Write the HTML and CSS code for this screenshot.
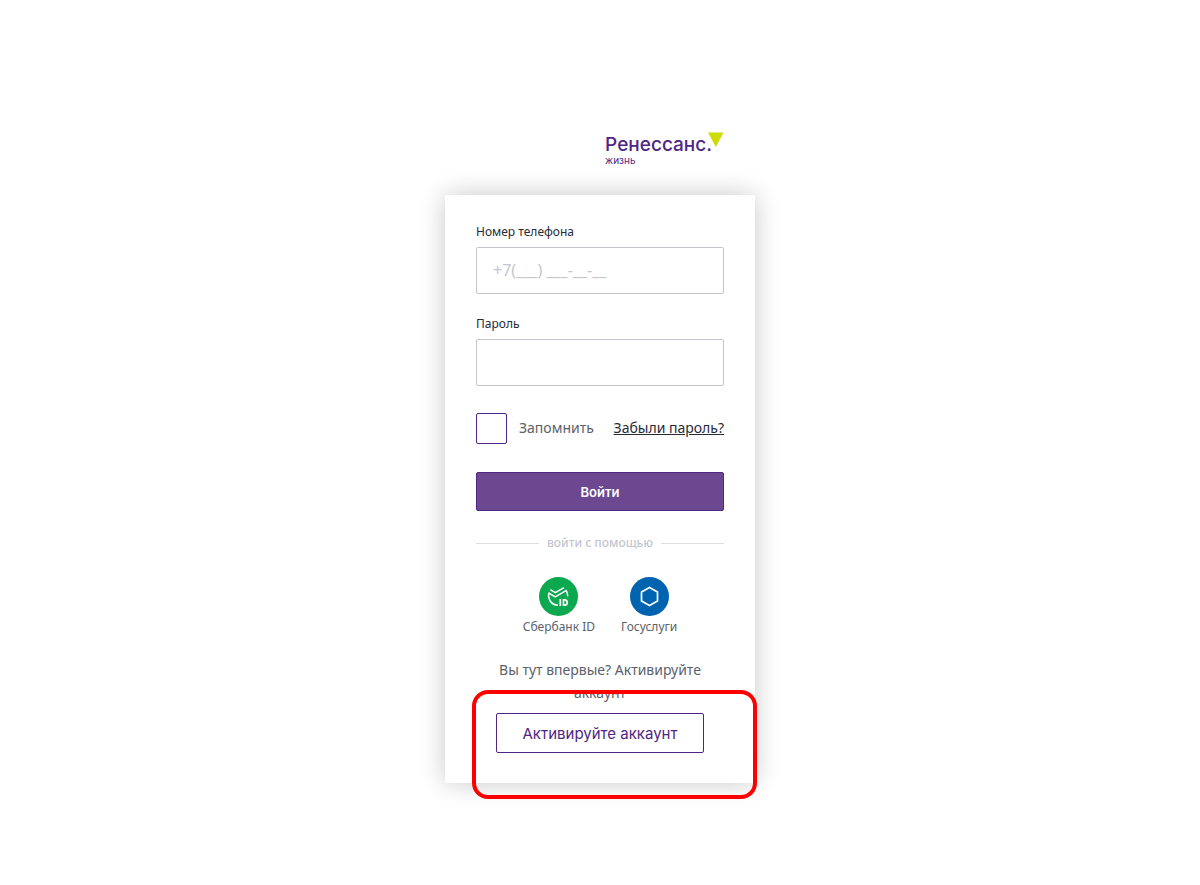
FILE: index.html
```
<!DOCTYPE html>
<html lang="ru">
<head>
    <meta charset="UTF-8">
    <meta name="viewport" content="width=device-width, initial-scale=1.0">
    <title>Ренессанс Жизнь - вход</title>
    <link rel="stylesheet" href="styles.css">
</head>
<body>
    <main class="login">
        <header class="logo">
            <div class="logo-text">
                <span class="logo-name">Ренессанс.</span>
                <span class="logo-sub">жизнь</span>
            </div>
            <svg class="logo-mark" width="16" height="15" viewBox="0 0 16 15">
                <path d="M0 .5h15.500L7.800 15z" fill="#cddc00"/>
            </svg>
        </header>
        <form class="card">
            <div class="field">
                <label for="phone">Номер телефона</label>
                <input type="tel" id="phone" placeholder="+7(___) ___-__-__">
            </div>
            <div class="field">
                <label for="password">Пароль</label>
                <input type="password" id="password">
            </div>
            <div class="options">
                <input type="checkbox" id="remember">
                <label for="remember">Запомнить</label>
                <a href="#">Забыли пароль?</a>
            </div>
            <button type="submit" class="btn-login">Войти</button>
            <div class="divider">войти с помощью</div>
            <div class="socials">
                <a href="#" class="social">
                    <svg width="39" height="39" viewBox="0 0 39 39">
                        <circle cx="19.5" cy="19.5" r="19.5" fill="#0ba84f"/>
                        <g fill="none" stroke="#fff" stroke-width="1.5">
                            <path d="M11.300 12.600l5 3 8.700-5"/>
                            <path d="M9.600 16l6.700 3.900 11.500-6.700"/>
                            <path d="M10 15.800c-.5 1.200-.6 2.600-.3 4.200.9 4.800 4.300 8 9.300 8.300M27.300 13.500c.9 1.700 1.300 3.600 1.400 5.700"/>
                            <path stroke-width="1.7" d="M21.300 22v7M24.500 22.800v5.400h1.200c1.600 0 2.500-1 2.500-2.700s-.9-2.700-2.500-2.700z"/>
                        </g>
                    </svg>
                    <span>Сбербанк ID</span>
                </a>
                <a href="#" class="social">
                    <svg width="39" height="39" viewBox="0 0 39 39">
                        <circle cx="19.5" cy="19.5" r="19.5" fill="#0063b0"/>
                        <path d="M19.500 10.400l8 4.500v9.200l-8 4.500-8-4.500v-9.200z" fill="none" stroke="#fff" stroke-width="1.7" stroke-linejoin="round"/>
                    </svg>
                    <span>Госуслуги</span>
                </a>
            </div>
            <p class="hint">Вы тут впервые? Активируйте аккаунт</p>
            <button type="button" class="btn-activate">Активируйте аккаунт</button>
            <div class="highlight"></div>
        </form>
    </main>
</body>
</html>
```
FILE: styles.css
```
* {
    box-sizing: border-box;
}
body {
    margin: 0;
    background-color: #fff;
    font-family: "Noto Sans", "Open Sans", sans-serif;
    color: #5b616b;
}
.login {
    max-width: 310px;
    margin: 0 auto;
    padding: 132px 0 60px;
}
.logo {
    display: flex;
    justify-content: flex-end;
    padding-right: 31px;
    height: 63px;
    color: #4f2683;
    font-family: Inter, sans-serif;
}
.logo-text {
    display: flex;
    flex-direction: column;
}
.logo-name {
    font-size: 19px;
    font-weight: 500;
    line-height: 25px;
}
.logo-sub {
    font-size: 10px;
    line-height: 6px;
}
.logo-mark {
    margin-left: -4px;
}
.card {
    position: relative;
    display: flex;
    flex-direction: column;
    padding: 26px 31px 30px;
    background-color: #fff;
    border-radius: 2px;
    box-shadow: 0 0 26px rgba(0, 0, 0, 0.22);
}
.field {
    display: flex;
    flex-direction: column;
    gap: 4px;
    margin-bottom: 19px;
}
.field label {
    font-size: 12px;
    line-height: 22px;
    color: #272b35;
}
.field input {
    width: 100%;
    height: 47px;
    padding: 0 16px 2px;
    border: 1px solid #c3c6ce;
    border-radius: 2px;
    font-family: inherit;
    font-size: 16px;
    color: #272b35;
}
.field input::placeholder {
    color: #c3c6ce;
}
.options {
    display: flex;
    align-items: center;
    margin: 8px 0 28px;
    font-size: 14px;
}
.options label,
.options a {
    padding-bottom: 2px;
}
.options input {
    appearance: none;
    width: 31px;
    height: 31px;
    margin: 0 12px 0 0;
    border: 1px solid #4f2683;
    border-radius: 2px;
}
.options input:checked {
    background-color: #6b488f;
}
.options a {
    margin-left: auto;
    color: #272b35;
}
.btn-login {
    height: 39px;
    border: 1px solid #4f2683;
    border-radius: 2px;
    background-color: #6b488f;
    color: #fff;
    font-family: Inter, sans-serif;
    font-size: 13px;
    font-weight: 600;
    cursor: pointer;
}
.divider {
    display: flex;
    align-items: center;
    gap: 8px;
    margin: 22px 0 24px;
    font-size: 12px;
    font-weight: 500;
    line-height: 20px;
    color: #c3c6ce;
}
.divider::before,
.divider::after {
    content: "";
    flex: 1;
    height: 1px;
    background-color: #dcdee2;
}
.socials {
    display: flex;
    justify-content: center;
    gap: 26px;
}
.social {
    display: flex;
    flex-direction: column;
    align-items: center;
    font-size: 12px;
    line-height: 22px;
    color: #5b616b;
    text-decoration: none;
}
.hint {
    margin: 20px 0 9px;
    font-size: 14px;
    line-height: 23px;
    text-align: center;
}
.btn-activate {
    height: 40px;
    margin: 0 20px;
    border: 1px solid #4f2683;
    border-radius: 2px;
    background-color: #fff;
    color: #4f2683;
    font-family: Inter, sans-serif;
    font-size: 15px;
    cursor: pointer;
}
/* red frame over the activation button */
.highlight {
    position: absolute;
    left: 27px;
    right: -2px;
    bottom: -16px;
    height: 109px;
    border: 4px solid #f00;
    border-radius: 16px;
    pointer-events: none;
}
```
